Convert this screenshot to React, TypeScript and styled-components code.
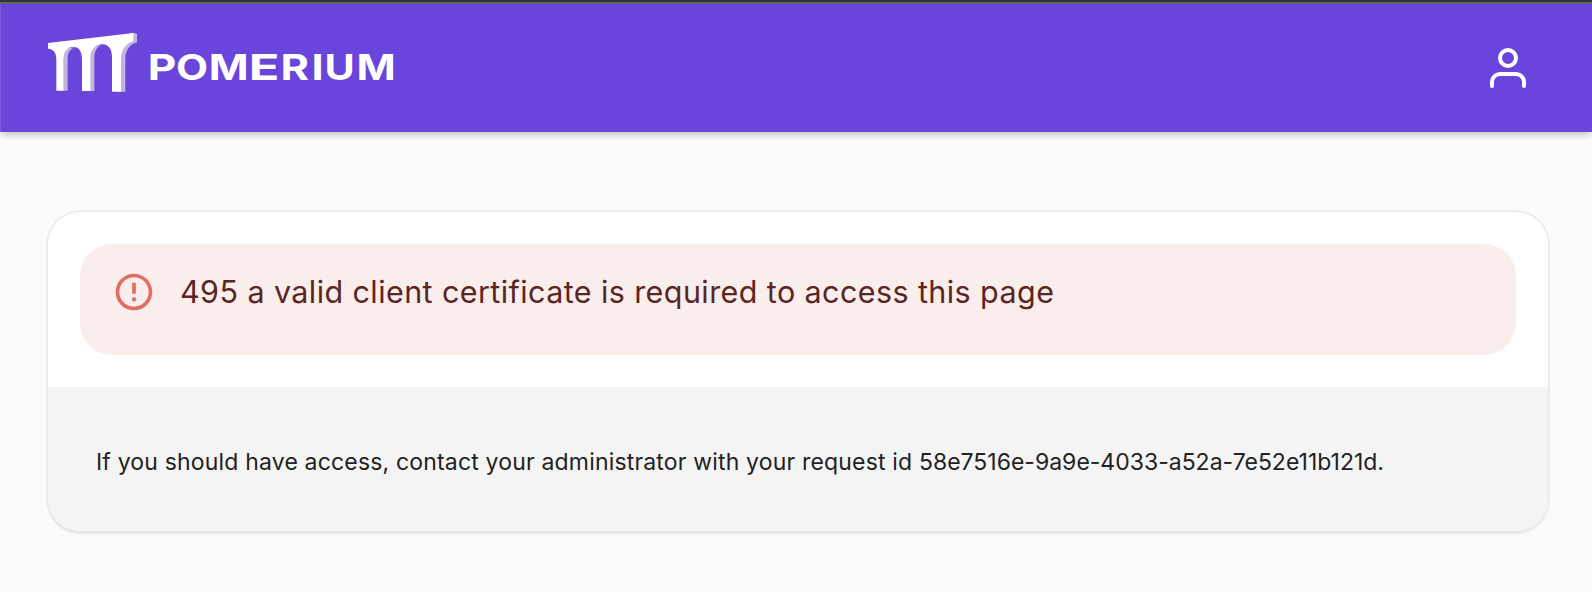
import React from "react";
import styled, { createGlobalStyle } from "styled-components";

const GlobalStyle = createGlobalStyle`
  * { box-sizing: border-box; }
  body {
    margin: 0;
    background: #fbfbfb;
    font-family: Inter, "Liberation Sans", sans-serif;
  }
`;

const Page = styled.div`
  min-height: 592px;
  display: flex;
  flex-direction: column;
`;

const Header = styled.header`
  height: 132px;
  flex: none;
  display: flex;
  align-items: flex-start;
  justify-content: space-between;
  padding: 20px 60px 0 40px;
  background: #6a45dc;
  border-top: 2px solid #333333;
  box-shadow: inset 0 2px 0 #666368, inset 1px 0 0 #7c5be0,
    0 4px 8px -2px rgba(0, 0, 0, 0.16), 0 2px 8px rgba(0, 0, 0, 0.12);
`;

const Brand = styled.div`
  display: flex;
  align-items: flex-start;
  padding-top: 2px;
`;

const Mark = styled.svg`
  width: 110px;
  height: 76px;
`;

const Wordmark = styled.svg`
  width: 270px;
  height: 76px;
  margin-left: -10px;
  font-family: Inter, sans-serif;
  font-weight: 700;
  font-size: 35.6px;
  fill: #fff;
`;

const UserButton = styled.button`
  margin-top: 22px;
  padding: 0;
  border: 0;
  background: none;
  display: flex;
`;

const Card = styled.main`
  margin: 80px 44px 0 48px;
  border-radius: 32px;
  overflow: hidden;
  background: #fff;
  box-shadow: 0 0 0 1.5px #e9e9e9, 0 2px 3px rgba(0, 0, 0, 0.16);
`;

const CardBody = styled.section`
  padding: 32px;
`;

const Alert = styled.div`
  height: 111px;
  display: flex;
  align-items: flex-start;
  gap: 24px;
  padding: 25.7px 32px 0;
  border-radius: 32px;
  background: #f9eeec;
  color: #5a2624;
`;

const Message = styled.h1`
  margin: 0;
  font-size: 30.5px;
  line-height: 44px;
  font-weight: 400;
  letter-spacing: 0.41px;
  white-space: nowrap;
`;

const CardFooter = styled.footer`
  height: 144px;
  padding: 56px 48px 0;
  background: #f4f4f4;
`;

const Note = styled.p`
  margin: 0;
  font-size: 23px;
  line-height: 38px;
  letter-spacing: 0.175px;
  color: #222;
  white-space: nowrap;
`;

const RequestId = styled.span`
  letter-spacing: 0;
`;

/* letter, x offset, horizontal stretch */
const letters: [string, number, number][] = [
  ["P", -2.2, 1.24],
  ["O", 26, 1.17],
  ["M", 58.8, 1.2],
  ["E", 98.8, 1.42],
  ["R", 130.6, 1.22],
  ["I", 161.4, 1.22],
  ["U", 174.4, 1.16],
  ["M", 206.6, 1.18],
];

export default function App() {
  return (
    <Page>
      <GlobalStyle />
      <Header>
        <Brand>
          <Mark viewBox="0 0 330 228">
            <path fill="#c3b5df" d="M268 29L281 26L291 30V55C272 59 256 78 256 103V203H230V90ZM140 70L193 61C172 64 163 80 163 103V201H140ZM60 75L112 68C92 70 83 85 83 105V200H60Z" />
            <path fill="#fff" d="M24 57L280 27V51C260 57 243 77 243 102V203H216V98C216 75 205 61 187 61C164 61 151 78 151 104V201H126V103C126 82 116 68 100 68C82 68 70 84 70 108V200H49V108C49 87 42 75 24 74Z" />
          </Mark>
          <Wordmark viewBox="-10 0 270 76" aria-label="Pomerium">
            {letters.map(([letter, x, stretch], i) => (
              <text key={i} transform={`translate(${x} 55.5) scale(${stretch} 1)`}>{letter}</text>
            ))}
          </Wordmark>
        </Brand>
        <UserButton aria-label="Account">
          <svg width="48" height="48" viewBox="0 0 24 24" fill="none" stroke="#fff" strokeWidth="2" strokeLinecap="round" strokeLinejoin="round">
            <path d="M20 21v-2a4 4 0 0 0-4-4H8a4 4 0 0 0-4 4v2" />
            <circle cx="12" cy="7" r="4" />
          </svg>
        </UserButton>
      </Header>
      <Card>
        <CardBody>
          <Alert role="alert">
            <svg width="44" height="44" viewBox="0 0 24 24" fill="#e46c66">
              <path d="M11 15h2v2h-2zm0-8h2v6h-2zm.99-5C6.47 2 2 6.48 2 12s4.47 10 9.99 10C17.52 22 22 17.52 22 12S17.52 2 11.99 2zM12 20c-4.42 0-8-3.58-8-8s3.58-8 8-8 8 3.58 8 8-3.58 8-8 8z" />
            </svg>
            <Message>495 a valid client certificate is required to access this page</Message>
          </Alert>
        </CardBody>
        <CardFooter>
          <Note>If you should have access, contact your administrator with your request id <RequestId>58e7516e-9a9e-4033-a52a-7e52e11b121d.</RequestId></Note>
        </CardFooter>
      </Card>
    </Page>
  );
}
